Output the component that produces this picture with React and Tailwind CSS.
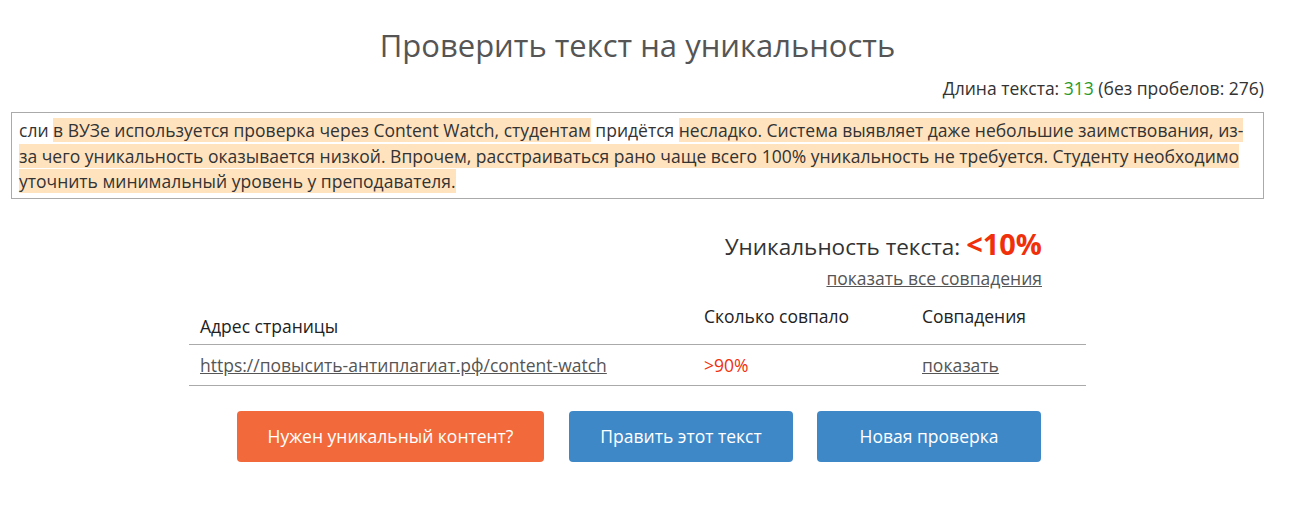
import React from 'react';

const hl = 'bg-[#ffe3bf]';

export default function App() {
  return (
    <div className="min-h-screen bg-white text-[#333] font-['Open_Sans',sans-serif]">
      <div className="ml-[11px] w-[1253px] pt-[24px]">
        <h1 className="text-center text-[31px] leading-[42px] text-[#555]">Проверить текст на уникальность</h1>

        <div className="mt-[10px] text-right text-[17.5px] leading-[24px]">
          Длина текста: <span className="text-[#2a9a2a]">313</span> (без пробелов: 276)
        </div>

        {/* checked text */}
        <div className="mt-[12px] border border-[#aaa] px-[7px] pb-[3px] pt-[5px] text-[17.5px] leading-[25.5px]">
          сли <span className={hl}>в ВУЗе используется проверка через Content Watch, студентам</span> придётся{' '}
          <span className={hl}>
            несладко. Система выявляет даже небольшие заимствования, из-за чего уникальность оказывается низкой.
            Впрочем, расстраиваться рано чаще всего 100% уникальность не требуется. Студенту необходимо уточнить
            минимальный уровень у преподавателя.
          </span>
        </div>

        <div className="ml-[178px] mt-[26px] w-[897px]">
          <div className="pr-[44px] text-right">
            <div className="text-[22.5px] leading-[38px]">
              Уникальность текста: <span className="text-[29px] font-bold text-[#f0300a]">&lt;10%</span>
            </div>
            <a href="#" className="text-[17.5px] leading-[25px] text-[#555] underline">показать все совпадения</a>
          </div>

          <table className="mt-[12px] w-full border-collapse text-[17.5px]">
            <thead>
              <tr className="border-b border-[#aaa]">
                <th className="w-[505px] px-[11px] pb-[5px] pt-[10px] text-left align-bottom font-medium text-[#222]">Адрес страницы</th>
                <th className="w-[218px] px-[10px] pb-[15px] text-left align-bottom font-medium text-[#222]">Сколько совпало</th>
                <th className="px-[10px] pb-[15px] text-left align-bottom font-medium text-[#222]">Совпадения</th>
              </tr>
            </thead>
            <tbody>
              <tr className="border-b border-[#aaa]">
                <td className="px-[11px] py-[7px]">
                  <a href="#" className="text-[#555] underline">https://повысить-антиплагиат.рф/content-watch</a>
                </td>
                <td className="px-[10px] py-[7px] text-[#f0300a]">&gt;90%</td>
                <td className="px-[10px] py-[7px]">
                  <a href="#" className="text-[#555] underline">показать</a>
                </td>
              </tr>
            </tbody>
          </table>

          <div className="mt-[25px] flex justify-end pr-[45px]">
            <button className="h-[51px] w-[307px] rounded-[4px] bg-[#f26a3b] text-[17.5px] text-white">Нужен уникальный контент?</button>
            <button className="ml-[25px] h-[51px] w-[224px] rounded-[4px] bg-[#3f88c8] text-[17.5px] text-white">Править этот текст</button>
            <button className="ml-[24px] h-[51px] w-[224px] rounded-[4px] bg-[#3f88c8] text-[17.5px] text-white">Новая проверка</button>
          </div>
        </div>
      </div>
    </div>
  );
}
